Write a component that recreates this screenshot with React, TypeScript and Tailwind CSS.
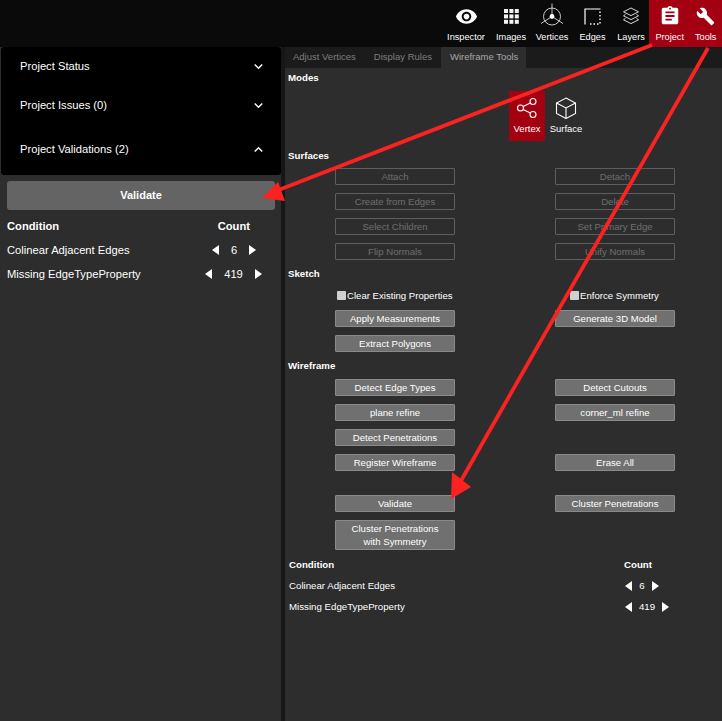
import { MdVisibility, MdAssignment, MdBuild, MdKeyboardArrowDown, MdKeyboardArrowUp } from "react-icons/md";

const F = "font-['Liberation_Sans',Arial,sans-serif]";

function Images() {
  const p = [0, 5.4, 10.8];
  return (
    <svg width="15" height="15" viewBox="0 0 15 15" fill="#f4f4f4">
      {p.map((y) => p.map((x) => <rect key={`${x}-${y}`} x={x} y={y} width="4" height="4" />))}
    </svg>
  );
}
function Vertices() {
  return (
    <svg width="24" height="26" viewBox="0 0 24 26" fill="none" stroke="#ddd" strokeWidth="0.9">
      <circle cx="12" cy="13.5" r="8.5" />
      <path d="M12 0.5V13.5M12 13.5L1 20.5M12 13.5L23 20.5" />
      <circle cx="12" cy="13.5" r="2.4" fill="#fff" stroke="none" />
    </svg>
  );
}
function Edges() {
  return (
    <svg width="17" height="17" viewBox="0 0 17 17" fill="none" stroke="#fff">
      <path d="M1 16.5V1H16.5" strokeWidth="1.2" />
      <path d="M16 3.5V16H4" strokeWidth="1.4" strokeDasharray="1.5 2" />
    </svg>
  );
}
function Layers() {
  return (
    <svg width="18" height="18" viewBox="0 0 18 18" fill="none" stroke="#eee" strokeWidth="0.9">
      <path d="M9 1L16.5 4.8L9 8.6L1.5 4.8Z" />
      <path d="M3.5 7.4L1.5 8.8L9 12.6L16.5 8.8L14.5 7.4" />
      <path d="M3.5 11.4L1.5 12.8L9 16.6L16.5 12.8L14.5 11.4" />
    </svg>
  );
}
function NavItem({ label, icon, w }: { label: string; icon: React.ReactNode; w: string }) {
  return (
    <div className={`flex flex-col items-center h-full ${w}`}>
      <div className="h-[32px] flex items-center justify-center">{icon}</div>
      <span className="text-[9.2px] leading-[10px] text-white">{label}</span>
    </div>
  );
}
function Tri({ dir }: { dir: "l" | "r" }) {
  return (
    <svg width="7" height="10" viewBox="0 0 7 10" fill="#fff">
      {dir === "l" ? <path d="M7 0V10L0 5Z" /> : <path d="M0 0V10L7 5Z" />}
    </svg>
  );
}
function Btn({ children, off, tall }: { children: React.ReactNode; off?: boolean; tall?: boolean }) {
  return (
    <div
      className={`w-[120px] ${tall ? "h-[30px] leading-[13px]" : "h-[17px] leading-[15px]"} flex items-center justify-center text-center text-[9.6px] rounded-[1px] border ${
        off ? "border-[#5e5e5e] text-[#6f6f6f]" : "border-[#8a8a8a] bg-[#707070] text-white"
      }`}
    >
      <span>{children}</span>
    </div>
  );
}
function Row({ a, b, off }: { a?: React.ReactNode; b?: React.ReactNode; off?: boolean }) {
  return (
    <div className="flex gap-[100px] pl-[50px] mb-[8px]">
      {a ? <Btn off={off}>{a}</Btn> : <div className="w-[120px]" />}
      {b ? <Btn off={off}>{b}</Btn> : null}
    </div>
  );
}
function Heading({ children, cls }: { children: React.ReactNode; cls: string }) {
  return <div className={`text-[9.7px] leading-[11px] font-bold text-white pl-[3px] ${cls}`}>{children}</div>;
}
function Acc({ label, up, cls }: { label: string; up?: boolean; cls: string }) {
  return (
    <div className={`flex items-center justify-between pl-[19px] pr-[14px] text-[11.2px] text-white ${cls}`}>
      <span>{label}</span>
      {up ? <MdKeyboardArrowUp size={17} /> : <MdKeyboardArrowDown size={17} />}
    </div>
  );
}

export default function App() {
  return (
    <div className={`relative w-[722px] h-[721px] overflow-hidden bg-[#2d2d2d] ${F}`}>
      <header className="h-[47px] bg-[#0a0a0a] flex justify-end">
        <div className="flex h-[47px]">
          <NavItem w="w-[42px]" label="Inspector" icon={<MdVisibility size={23} color="#fff" />} />
          <NavItem w="w-[45px] pl-[3px]" label="Images" icon={<Images />} />
          <NavItem w="w-[40px]" label="Vertices" icon={<Vertices />} />
          <NavItem w="w-[41px]" label="Edges" icon={<Edges />} />
          <NavItem w="w-[36px]" label="Layers" icon={<Layers />} />
          <div className="flex bg-[#a30012] h-[48px] w-[73px] pl-[2px]">
            <NavItem w="w-[38px]" label="Project" icon={<MdAssignment size={22} color="#fff" />} />
            <NavItem w="w-[33px] ml-[1px]" label="Tools" icon={<MdBuild size={19} color="#fff" />} />
          </div>
        </div>
      </header>
      <div className="flex h-[674px] bg-[#161616]">
        <aside className="w-[281px] bg-[#2d2d2d] shrink-0">
          <div className="bg-black h-[128px] rounded-[3px] ml-[1px] flex flex-col">
            <Acc label="Project Status" cls="h-[39px]" />
            <Acc label="Project Issues (0)" cls="h-[39px]" />
            <Acc label="Project Validations (2)" up cls="h-[47px] pt-[1px]" />
          </div>
          <div className="mx-[7px] mt-[6px] w-[268px] h-[29px] rounded-[3px] bg-[#646464] flex items-center justify-center text-[11px] font-bold text-white">
            Validate
          </div>
          <div className="px-[7px] mt-[4px] text-[11.2px] text-white">
            <div className="flex h-[24px] font-bold items-center justify-between pr-[24px]"><span>Condition</span><span>Count</span></div>
            <div className="flex h-[24px] items-center justify-between pr-[18px]">
              <span>Colinear Adjacent Edges</span>
              <span className="flex items-center w-[44px] justify-between"><Tri dir="l" /><span>6</span><Tri dir="r" /></span>
            </div>
            <div className="flex h-[24px] items-center justify-between pr-[12px]">
              <span>Missing EdgeTypeProperty</span>
              <span className="flex items-center w-[57px] justify-between"><Tri dir="l" /><span>419</span><Tri dir="r" /></span>
            </div>
          </div>
        </aside>
        <main className="ml-[4px] flex-1 flex flex-col">
          <nav className="h-[21px] flex text-[9.5px] text-[#7e7e7e] bg-[#1b1b1b] items-center">
            <span className="pl-[8px] pr-[9px]">Adjust Vertices</span>
            <span className="px-[9px]">Display Rules</span>
            <span className="h-full flex items-center pl-[9px] pr-[8px] bg-[#2d2d2d] text-[#a8a8a8]">Wireframe Tools</span>
          </nav>
          <section className="flex-1 bg-[#2d2d2d] relative text-white">
            <Heading cls="pt-[4px]">Modes</Heading>
            <div className="flex justify-start ml-[224px] mt-[8px] h-[50px]">
              <div className="w-[36px] h-[50px] bg-[#a30012] flex flex-col items-center pt-[6px]">
                <svg width="22" height="22" viewBox="0 0 22 22" fill="none" stroke="#fff" strokeWidth="1.1">
                  <circle cx="17" cy="4.5" r="3" /><circle cx="4.5" cy="11" r="3" /><circle cx="17" cy="17.5" r="3" />
                  <path d="M7.2 9.6L14.3 6M7.2 12.4L14.3 16" />
                </svg>
                <span className="text-[9.5px] leading-[10px] mt-[5px]">Vertex</span>
              </div>
              <div className="w-[42px] h-[50px] flex flex-col items-center pt-[6px]">
                <svg width="22" height="22" viewBox="0 0 22 22" fill="none" stroke="#fff" strokeWidth="1.1">
                  <path d="M11 1L20.5 6V16.5L11 21.5L1.5 16.5V6Z" /><path d="M1.5 6L11 11L20.5 6M11 11V21.5" />
                </svg>
                <span className="text-[9.5px] leading-[10px] mt-[5px]">Surface</span>
              </div>
            </div>
            <Heading cls="mt-[9px] mb-[7px]">Surfaces</Heading>
            <Row off a="Attach" b="Detach" />
            <Row off a="Create from Edges" b="Delete" />
            <Row off a="Select Children" b="Set Primary Edge" />
            <Row off a="Flip Normals" b="Unify Normals" />
            <Heading cls="mt-[0px]">Sketch</Heading>
            <div className="flex gap-[100px] pl-[50px] mt-[10px] mb-[7px] h-[14px] text-[9.6px] items-center">
              <div className="w-[120px] flex items-center pl-[2px] whitespace-nowrap"><span className="w-[9px] h-[9px] bg-[#d0d0d0] rounded-[1px] mt-[-2px]" /><span className="ml-[1px]">Clear Existing Properties</span></div>
              <div className="w-[120px] flex items-center pl-[15px] whitespace-nowrap"><span className="w-[9px] h-[9px] bg-[#d0d0d0] rounded-[1px] mt-[-2px]" /><span className="ml-[1px]">Enforce Symmetry</span></div>
            </div>
            <Row a="Apply Measurements" b="Generate 3D Model" />
            <Row a="Extract Polygons" />
            <Heading cls="mt-[0px] mb-[8px]">Wireframe</Heading>
            <Row a="Detect Edge Types" b="Detect Cutouts" />
            <Row a="plane refine" b="corner_ml refine" />
            <Row a="Detect Penetrations" />
            <Row a="Register Wireframe" b="Erase All" />
            <div className="h-[16px]" />
            <Row a="Validate" b="Cluster Penetrations" />
            <div className="pl-[50px]">
              <Btn tall>Cluster Penetrations<br />with Symmetry</Btn>
            </div>
            <div className="pl-[4px] mt-[8px] text-[9.7px]">
              <div className="flex h-[14px] items-center font-bold"><span className="w-[335px]">Condition</span><span>Count</span></div>
              <div className="flex h-[21px] mt-[4px] items-center"><span className="w-[336px]">Colinear Adjacent Edges</span><span className="flex items-center w-[34px] justify-between"><Tri dir="l" /><span>6</span><Tri dir="r" /></span></div>
              <div className="flex h-[21px] items-center"><span className="w-[336px]">Missing EdgeTypeProperty</span><span className="flex items-center w-[44px] justify-between"><Tri dir="l" /><span>419</span><Tri dir="r" /></span></div>
            </div>
          </section>
        </main>
      </div>
      <svg className="absolute inset-0 pointer-events-none" width="722" height="721" viewBox="0 0 722 721">
        <path d="M652 45L276 191" stroke="#fb2222" strokeWidth="3.8" fill="none" />
        <path d="M262 198L278 182L285 201Z" fill="#fb2222" />
        <path d="M708 48L458 486" stroke="#fb2222" strokeWidth="3.8" fill="none" />
        <path d="M451 499L452 472L471 487Z" fill="#fb2222" />
      </svg>
    </div>
  );
}
